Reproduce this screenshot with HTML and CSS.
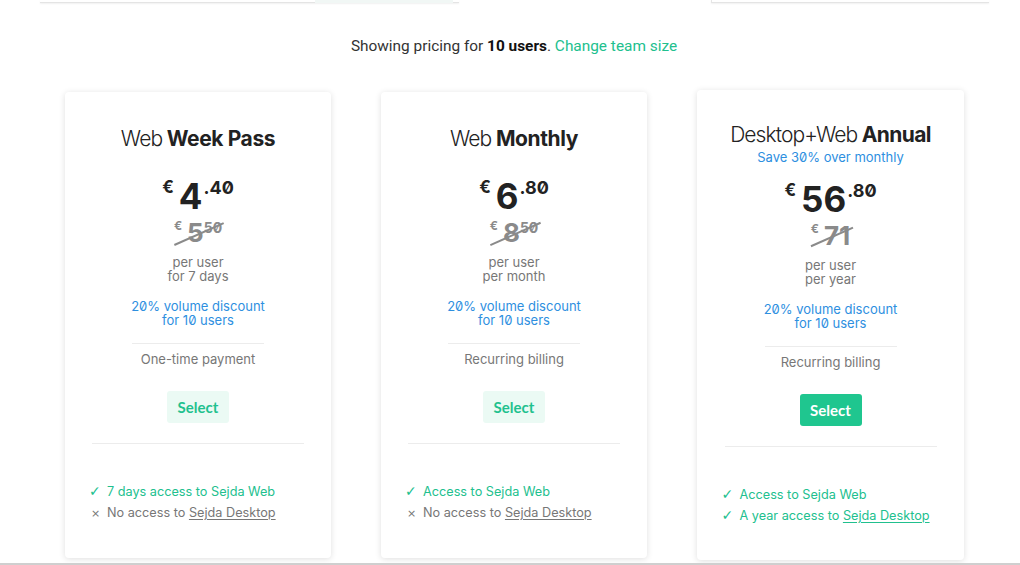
FILE: index.html
```html
<!DOCTYPE html>
<html lang="en">
<head>
<meta charset="utf-8">
<title>Sejda pricing</title>
<link rel="stylesheet" href="styles.css">
</head>
<body>
<div class="top-strip">
  <div class="tab-box"><div class="tab-active"></div></div>
  <div class="tab-box tab-right"></div>
</div>

<p class="team">Showing pricing for <b>10 users</b>. <a class="team-link">Change team size</a></p>

<div class="plans">
  <div class="card">
    <h2 class="title"><span class="light">Web</span> Week Pass</h2>
    <div class="price"><span class="cur">€</span><span class="int">4</span><span class="dec">.40</span></div>
    <div class="old"><span class="cur">€</span><span class="int">5</span><span class="dec">50</span></div>
    <p class="per">per user<br>for 7 days</p>
    <p class="discount">20% volume discount<br>for 10 users</p>
    <div class="billing">One-time payment</div>
    <button class="select">Select</button>
    <ul class="features">
      <li class="yes"><span class="mark">✓</span><span>7 days access to Sejda Web</span></li>
      <li class="no"><span class="mark">×</span><span>No access to <u>Sejda Desktop</u></span></li>
    </ul>
  </div>

  <div class="card">
    <h2 class="title"><span class="light">Web</span> Monthly</h2>
    <div class="price"><span class="cur">€</span><span class="int">6</span><span class="dec">.80</span></div>
    <div class="old"><span class="cur">€</span><span class="int">8</span><span class="dec">50</span></div>
    <p class="per">per user<br>per month</p>
    <p class="discount">20% volume discount<br>for 10 users</p>
    <div class="billing">Recurring billing</div>
    <button class="select">Select</button>
    <ul class="features">
      <li class="yes"><span class="mark">✓</span><span>Access to Sejda Web</span></li>
      <li class="no"><span class="mark">×</span><span>No access to <u>Sejda Desktop</u></span></li>
    </ul>
  </div>

  <div class="card card-featured">
    <h2 class="title"><span class="light">Desktop+Web</span> Annual</h2>
    <p class="save">Save 30% over monthly</p>
    <div class="price"><span class="cur">€</span><span class="int">56</span><span class="dec">.80</span></div>
    <div class="old"><span class="cur">€</span><span class="int">71</span></div>
    <p class="per">per user<br>per year</p>
    <p class="discount">20% volume discount<br>for 10 users</p>
    <div class="billing">Recurring billing</div>
    <button class="select select-primary">Select</button>
    <ul class="features">
      <li class="yes"><span class="mark">✓</span><span>Access to Sejda Web</span></li>
      <li class="yes"><span class="mark">✓</span><span>A year access to <u>Sejda Desktop</u></span></li>
    </ul>
  </div>
</div>

<div class="bottom-rule"></div>
</body>
</html>
```

FILE: styles.css
```css
html, body {
  margin: 0;
  padding: 0;
  background: #fff;
}

body {
  width: 1020px;
  height: 565px;
  overflow: hidden;
  font-family: Inter, "Liberation Sans", sans-serif;
  font-feature-settings: "zero" 1;
  color: #333;
  display: flex;
  flex-direction: column;
}

/* top remnants of the section above */
.top-strip {
  height: 4px;
  display: flex;
  padding-left: 40px;
}

.tab-box {
  width: 419px;
  height: 3px;
  background: #fff;
  border-bottom: 1px solid #e4e4e4;
  box-shadow: 0 1px 2px rgba(0, 0, 0, 0.06);
  display: flex;
  justify-content: flex-end;
  padding-right: 6px;
  box-sizing: border-box;
}

.tab-active {
  width: 138px;
  height: 3px;
  background: #f1f7f5;
}

.tab-right {
  width: 278px;
  margin-left: 252px;
  border-left: 1px solid #e6e6e6;
}

.team {
  margin: 32px 0 0;
  padding-left: 8px;
  text-align: center;
  font-family: Roboto, "Liberation Sans", sans-serif;
  font-size: 15.4px;
  line-height: 20px;
  color: #333;
}

.team b {
  font-weight: 700;
  color: #111;
}

.team-link {
  color: #21c08e;
}

.plans {
  margin: 34px 0 0 65px;
  width: 899px;
  display: flex;
  align-items: center;
  gap: 50px;
}

.card {
  width: 266px;
  box-sizing: border-box;
  background: #fff;
  border-radius: 4px;
  box-shadow: 0 1px 6px rgba(0, 0, 0, 0.13);
  padding: 34px 0 34px;
  display: flex;
  flex-direction: column;
  align-items: center;
  text-align: center;
}

.card-featured {
  width: 267px;
  padding-top: 32px;
}

.title {
  margin: 0;
  font-size: 21px;
  line-height: 26px;
  font-weight: 700;
  letter-spacing: -0.4px;
  color: #222;
  white-space: nowrap;
}

.title .light {
  font-weight: 300;
  letter-spacing: -0.9px;
}

.card-featured .title {
  letter-spacing: -0.6px;
}

.save {
  margin: 1px 0 0;
  font-size: 13px;
  line-height: 16px;
  color: #2e8fdf;
}

.price {
  margin-top: 26px;
  height: 36px;
  display: flex;
  align-items: flex-start;
  justify-content: center;
  font-weight: 700;
  color: #222;
}

.card-featured .price {
  margin-top: 16px;
}

.price .cur {
  font-size: 17px;
  line-height: 18px;
  margin-right: 5px;
}

.price .int {
  font-size: 35px;
  line-height: 36px;
}

.price .dec {
  font-size: 18px;
  line-height: 18px;
  margin-top: 1px;
  margin-left: 1px;
}

.old {
  position: relative;
  margin-top: 6px;
  height: 26px;
  display: flex;
  align-items: flex-start;
  justify-content: center;
  font-weight: 700;
  color: #8a8a8a;
}

.old::after {
  content: "";
  position: absolute;
  left: -2px;
  right: -4px;
  top: 13px;
  height: 2px;
  background: #8a8a8a;
  transform: rotate(-24deg);
}

.old .cur {
  font-size: 12px;
  line-height: 12px;
  margin-right: 5px;
}

.old .int {
  font-size: 26px;
  line-height: 26px;
}

.old .dec {
  font-size: 14px;
  line-height: 14px;
  margin-top: 1px;
}

.per {
  margin: 9px 0 0;
  font-size: 13px;
  line-height: 14px;
  color: #777;
}

.discount {
  margin: 16px 0 0;
  font-size: 13px;
  line-height: 14px;
  color: #2e8fdf;
}

.billing {
  margin-top: 16px;
  width: 132px;
  border-top: 1px solid #ececec;
  padding-top: 7px;
  font-size: 13px;
  line-height: 16px;
  color: #777;
}

.select {
  margin-top: 24px;
  width: 62px;
  height: 32px;
  border: none;
  border-radius: 3px;
  background: #ebfaf4;
  color: #1fc18e;
  font-family: Lato, "Open Sans", sans-serif;
  font-size: 15px;
  font-weight: 700;
  padding: 0;
}

.select-primary {
  background: #1fc68f;
  color: #fff;
}

.features {
  list-style: none;
  margin: 20px 0 0;
  padding: 37px 0 0 0;
  width: 212px;
  border-top: 1px solid #ececec;
  text-align: left;
  font-size: 12.7px;
  line-height: 21px;
}

.features li {
  display: flex;
  align-items: baseline;
  margin-left: -3px;
  white-space: nowrap;
}

.features .mark {
  width: 18px;
  flex: none;
  font-family: "DejaVu Sans", sans-serif;
  font-size: 14px;
}

.features .yes {
  color: #21c08e;
}

.features .no {
  color: #777;
}

.features .no .mark {
  font-size: 11px;
  padding-left: 2px;
  width: 16px;
}

.features u {
  text-underline-offset: 2px;
}

.bottom-rule {
  margin-top: auto;
  height: 2px;
  background: #cfcfcf;
}
```
